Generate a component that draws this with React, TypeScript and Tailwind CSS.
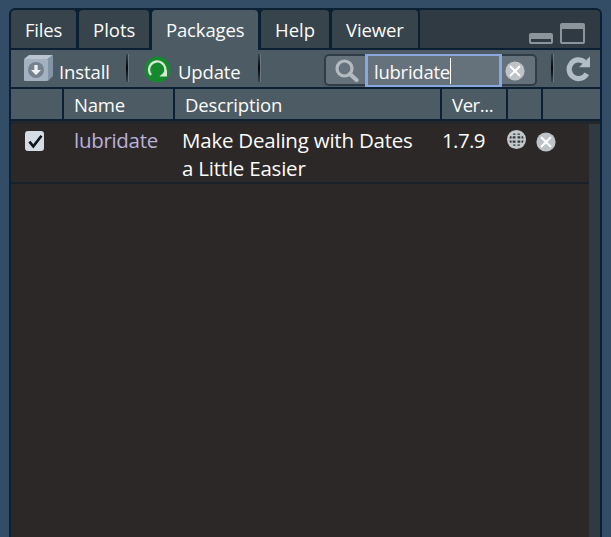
import type { ReactNode } from "react";

function Tab({ label, className }: { label: string; className: string }) {
  return (
    <div className={`h-[38px] shrink-0 rounded-t-[4px] pt-[6px] leading-[28px] whitespace-nowrap ${className}`}>
      {label}
    </div>
  );
}

function Separator({ className }: { className: string }) {
  return (
    <div className={`flex h-[28px] w-[3px] shrink-0 ${className}`}>
      <div className="w-[2px] bg-linear-to-b from-[#3a464f] via-[#04070a] to-[#3a464f]" />
      <div className="w-px bg-[#6a7680]" />
    </div>
  );
}

function HeaderCell({ className, children }: { className: string; children?: ReactNode }) {
  return <div className={`h-[30px] shrink-0 pt-[2px] leading-[28px] whitespace-nowrap ${className}`}>{children}</div>;
}

function InstallIcon() {
  return (
    <svg className="mt-[4px] ml-[13px] shrink-0" width="30" height="29" viewBox="0 0 30 29">
      <path d="M0 5 5 1H29L24 5Z" fill="#b9c4d0" />
      <path d="M24 5 29 1V22L24 27Z" fill="#8394a7" />
      <rect y="5" width="24" height="22" rx="1" fill="#a3b1c1" />
      <circle cx="12" cy="16" r="8" fill="#76828e" />
      <path d="M10.3 11h3.4v5h3.3L12 21l-5-5h3.3Z" fill="#eef1f3" />
    </svg>
  );
}

function UpdateIcon() {
  return (
    <svg className="mt-[6px] shrink-0" width="27" height="27" viewBox="0 0 27 27">
      <circle cx="13.5" cy="13.5" r="13" fill="#16892f" />
      <path d="M7 19A8.2 8.2 0 1 1 20.4 17.6" fill="none" stroke="#d6e9d4" strokeWidth="2.3" />
      <path d="M15.4 20.6h7.6v-7.2Z" fill="#d6e9d4" />
    </svg>
  );
}

function CloseIcon({ className }: { className: string }) {
  return (
    <svg className={`shrink-0 ${className}`} width="20" height="20" viewBox="0 0 20 20">
      <circle cx="10" cy="10" r="9.6" fill="#bec3c8" />
      <path d="m5 5 10 10m0-10L5 15" stroke="#fff" strokeWidth="2" />
    </svg>
  );
}

function GlobeIcon() {
  return (
    <svg className="mt-[6px] shrink-0" width="20" height="20" viewBox="0 0 20 20">
      <circle cx="9.5" cy="9.5" r="9.5" fill="#c3c8cb" />
      <path
        d="M9.5 1v17M1 9.5h17M2.3 5.2h14.4M2.3 13.8h14.4M5.8 2C3.9 7 3.9 12 5.8 17M13.2 2c1.9 5 1.9 10 0 15"
        fill="none"
        stroke="#c3c8cb"
        strokeWidth="3.4"
      />
      <path
        d="M6.3 3.6h2.2v1.1H5.9ZM10.5 3.6h2.2l.4 1.1h-2.6ZM3 6.2h1.6v2.3H2.4ZM5.8 6.2h2.7v2.3H5.6ZM10.5 6.2h2.7l.2 2.3h-2.9ZM14.5 6.2H16l.6 2.3h-2ZM2.4 10.5h2.1l.2 2.3H3ZM5.6 10.5h2.9v2.3H5.8ZM10.5 10.5h2.9l-.2 2.3h-2.7ZM14.6 10.5h2l-.6 2.3h-1.5ZM5.9 14.4h2.6v1.3H6.4ZM10.5 14.4h2.6l-.5 1.3h-2.1Z"
        fill="#34393b"
      />
    </svg>
  );
}

export default function App() {
  return (
    <div className="h-[537px] w-[611px] overflow-hidden bg-[#324d65] pt-2 pl-[9px] font-['Open_Sans','Noto_Sans',sans-serif] text-[18.5px] text-[#fbfbf9]">
      <div className="flex h-[529px] w-[593px] flex-col overflow-hidden rounded-t-[6px] border-x-2 border-t-2 border-[#0c2034] bg-[#2d2828]">
        <div className="flex h-[38px] shrink-0 bg-[#303a42]">
          <div className="flex gap-[3px] bg-[#0c2034] pr-[2px]">
            <Tab label="Files" className="w-[65px] bg-[#38444c] pl-[14px] tracking-[-0.2px]" />
            <Tab label="Plots" className="w-[70px] bg-[#38444c] pl-[14px]" />
            <Tab label="Packages" className="w-[106px] bg-[#4d5b65] pl-[14px] tracking-[-0.15px]" />
            <Tab label="Help" className="w-[68px] bg-[#38444c] pl-[14px]" />
            <Tab label="Viewer" className="w-[86px] bg-[#38444c] pl-[14px] tracking-[-0.1px]" />
          </div>
          <div className="mt-[23px] ml-[109px] h-[11px] w-[24px] rounded-[2px] border-2 border-t-[6px] border-[#8d959c]" />
          <div className="mt-[13px] ml-[7px] h-[21px] w-[25px] rounded-[2px] border-2 border-t-[6px] border-[#8d959c]" />
        </div>
        <div className="flex h-[2px] shrink-0 bg-[#0c2034]">
          <div className="ml-[141px] w-[106px] bg-[#4d5b65]" />
        </div>
        <div className="flex h-[37px] shrink-0 bg-[#4d5b65]">
          <InstallIcon />
          <span className="mt-[8px] ml-[5px] w-[67px] shrink-0 leading-[28px] tracking-[-0.1px]">Install</span>
          <Separator className="mt-[4px] mr-[15px]" />
          <UpdateIcon />
          <span className="mt-[8px] ml-[7px] w-[80px] shrink-0 leading-[28px] tracking-[-0.15px]">Update</span>
          <Separator className="mt-[4px]" />
          <div className="mt-[4px] ml-[63px] flex h-[32px] w-[213px] shrink-0 rounded-[5px] border-2 border-[#303d48] bg-[#66727b]">
            <svg className="mt-[3px] ml-[9px] shrink-0" width="24" height="24" viewBox="0 0 24 24">
              <circle cx="9.5" cy="9.5" r="7.5" fill="none" stroke="#b4bbc0" strokeWidth="3.2" />
              <path d="m15 15 6.5 6" stroke="#b4bbc0" strokeWidth="4.2" strokeLinecap="round" />
            </svg>
            <div className="-mt-[2px] ml-[6px] flex h-[33px] w-[137px] shrink-0 border-[3px] border-t-2 border-b-2 border-[#8ba8dc] bg-[#66727b]">
              <span className="mt-[2px] ml-[6px] w-[76px] leading-[28px] tracking-[-0.25px]">lubridate</span>
              <span className="mt-[2px] h-[26px] w-px bg-white" />
            </div>
            <CloseIcon className="mt-[5px] ml-[3px]" />
          </div>
          <Separator className="mt-[4px] ml-[14px]" />
          <svg className="mt-[5px] ml-[12px] shrink-0" width="27" height="27" viewBox="0 0 27 27">
            <path d="M20.8 18.8A9.4 9.4 0 1 1 18.6 7" fill="none" stroke="#b3bdc7" strokeWidth="5.2" />
            <path d="M13 12.2H24V1.6Z" fill="#b3bdc7" />
          </svg>
        </div>
        <div className="flex h-[34px] shrink-0 gap-[2px] border-y-2 border-[#0c2034] bg-[#0c2034]">
          <HeaderCell className="w-[51px] bg-[#4d5b65]" />
          <HeaderCell className="w-[109px] bg-[#4d5b65] pl-[10px] tracking-[-0.2px]">Name</HeaderCell>
          <HeaderCell className="w-[265px] bg-[#4d5b65] pl-[10px] tracking-[-0.15px]">Description</HeaderCell>
          <HeaderCell className="w-[64px] bg-[#4d5b65] pl-[10px] tracking-[-0.4px]">Ver...</HeaderCell>
          <HeaderCell className="w-[33px] bg-[#4d5b65]" />
          <HeaderCell className="w-[57px] bg-[#4d5b65]" />
        </div>
        <div className="h-[3px] shrink-0 bg-[#252629]" />
        <div className="flex grow">
          <div className="w-[578px]">
            <div className="flex h-[60px] border-b-2 border-[#18202a] text-[20.5px] leading-[28px] tracking-[-0.22px]">
              <svg className="mt-[7px] ml-[13px] shrink-0" width="21" height="21" viewBox="0 0 21 21">
                <rect x="1" y="0" width="19" height="20" rx="3" fill="#d5dce3" />
                <path d="m5.4 10.6 3.9 4.8 8.2-10.6" fill="none" stroke="#10151a" strokeWidth="2.6" />
              </svg>
              <span className="mt-[2px] ml-[29px] w-[108px] shrink-0 tracking-[-0.3px] text-[#b8b1da]">lubridate</span>
              <span className="mt-[2px] w-[260px] shrink-0 whitespace-nowrap">
                Make Dealing with Dates
                <br />a Little Easier
              </span>
              <span className="mt-[2px] w-[65px] shrink-0 tracking-[-0.6px]">1.7.9</span>
              <GlobeIcon />
              <CloseIcon className="mt-[8px] ml-[9px]" />
            </div>
          </div>
          <div className="w-[11px] bg-[#303a42]" />
        </div>
      </div>
    </div>
  );
}
